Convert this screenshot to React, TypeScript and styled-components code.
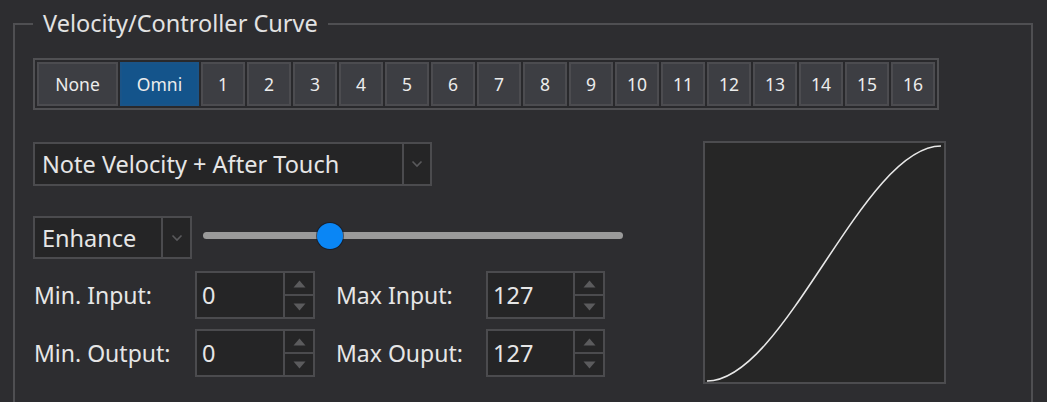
import React from "react";
import styled, { createGlobalStyle } from "styled-components";

const GlobalStyle = createGlobalStyle`
  html, body {
    margin: 0;
    padding: 0;
    background: #2d2d30;
  }
  body {
    font-family: "Noto Sans", "Open Sans", sans-serif;
    color: #e4e4e4;
    overflow: hidden;
  }
`;

const Page = styled.div`
  width: 1047px;
  height: 402px;
  box-sizing: border-box;
  padding: 11px 14px 0 13px;
  background: #2d2d30;
  overflow: hidden;
`;

const Group = styled.fieldset`
  margin: 0;
  height: 391px;
  box-sizing: border-box;
  border: 2px solid #4f4f52;
  border-bottom: none;
  border-radius: 0;
  padding: 21px 18px 0 18px;
  min-width: 0;
`;

const Title = styled.legend`
  padding: 0 10px 2px 10px;
  font-size: 23.5px;
  line-height: 24px;
  color: #e2e2e2;
`;

const ChannelStrip = styled.div`
  display: inline-flex;
  gap: 2px;
  padding: 2px;
  border: 2px solid #505053;
  background: #29292c;
`;

const ChannelButton = styled.button<{ $active?: boolean; $wide?: number }>`
  width: ${(p) => p.$wide ?? 44}px;
  height: 44px;
  box-sizing: border-box;
  margin: 0;
  padding: 0;
  border: 2px solid ${(p) => (p.$active ? "#1a5488" : "#4c4c50")};
  background: ${(p) => (p.$active ? "#14548b" : "#3d3e43")};
  color: #ececec;
  font-family: "Noto Sans", "Open Sans", sans-serif;
  font-size: 17.5px;
  cursor: pointer;
`;

const Body = styled.div`
  display: flex;
  align-items: flex-start;
  gap: 80px;
  margin-top: 32px;
`;

const Controls = styled.div`
  display: flex;
  flex-direction: column;
  width: 590px;
`;

const SelectBox = styled.div<{ $width: number; $height: number }>`
  display: flex;
  width: ${(p) => p.$width}px;
  height: ${(p) => p.$height}px;
  box-sizing: border-box;
  border: 2px solid #4b4b4e;
  background: #252526;
`;

const SelectText = styled.div`
  flex: 1;
  display: flex;
  align-items: center;
  padding-left: 7px;
  font-size: 23.5px;
  color: #e6e6e6;
  white-space: nowrap;
  overflow: hidden;
`;

const SelectArrow = styled.div<{ $width: number }>`
  width: ${(p) => p.$width}px;
  border-left: 2px solid #4b4b4e;
  display: flex;
  align-items: center;
  justify-content: center;
`;

const CurveRow = styled.div`
  display: flex;
  align-items: center;
  gap: 11px;
  margin-top: 30px;
`;

const SliderTrack = styled.div`
  position: relative;
  width: 420px;
  height: 7px;
  border-radius: 4px;
  background: #9a9a9a;
  margin-top: -4px;
`;

const SliderThumb = styled.div`
  position: absolute;
  top: 50%;
  width: 26px;
  height: 26px;
  margin: -13px 0 0 -13px;
  border-radius: 50%;
  background: #0a86f5;
  box-shadow: 0 0 0 1px rgba(10, 20, 40, 0.55);
`;

const RangeGrid = styled.div`
  display: grid;
  grid-template-columns: 162px 120px 171px 119px;
  row-gap: 10px;
  margin-top: 12px;
  align-items: center;
`;

const FieldLabel = styled.div<{ $indent?: boolean }>`
  font-size: 23px;
  color: #e6e6e6;
  padding-left: ${(p) => (p.$indent ? 21 : 1)}px;
  white-space: nowrap;
`;

const SpinBox = styled.div`
  display: flex;
  height: 48px;
  box-sizing: border-box;
  border: 2px solid #4b4b4e;
  background: #252526;
`;

const SpinValue = styled.div`
  flex: 1;
  display: flex;
  align-items: center;
  padding-left: 5px;
  font-size: 23.5px;
  color: #e6e6e6;
`;

const SpinButtons = styled.div`
  width: 28px;
  border-left: 2px solid #4b4b4e;
  display: flex;
  flex-direction: column;
`;

const SpinButton = styled.div<{ $top?: boolean }>`
  flex: 1;
  display: flex;
  align-items: center;
  justify-content: center;
  border-top: ${(p) => (p.$top ? "none" : "2px solid #4b4b4e")};
`;

const Graph = styled.div`
  width: 243px;
  height: 243px;
  box-sizing: border-box;
  border: 2px solid #4c4c4f;
  background: #262626;
  margin-top: -1px;
`;

const Chevron = () => (
  <svg width="12" height="8" viewBox="0 0 12 8">
    <polyline points="1.5,1.5 6,6 10.5,1.5" fill="none" stroke="#5a5a5c" strokeWidth="1.6" />
  </svg>
);

const Arrow = ({ up }: { up?: boolean }) => (
  <svg width="13" height="8" viewBox="0 0 13 8">
    <polygon points={up ? "6.5,0.5 12.5,7.5 0.5,7.5" : "0.5,0.5 12.5,0.5 6.5,7.5"} fill="#5b5b5d" />
  </svg>
);

const Select = ({ label, width, height, arrowWidth }: { label: string; width: number; height: number; arrowWidth: number }) => (
  <SelectBox $width={width} $height={height}>
    <SelectText>{label}</SelectText>
    <SelectArrow $width={arrowWidth}>
      <Chevron />
    </SelectArrow>
  </SelectBox>
);

const Spin = ({ value }: { value: number }) => (
  <SpinBox>
    <SpinValue>{value}</SpinValue>
    <SpinButtons>
      <SpinButton $top>
        <Arrow up />
      </SpinButton>
      <SpinButton>
        <Arrow />
      </SpinButton>
    </SpinButtons>
  </SpinBox>
);

const Slider = ({ value, max }: { value: number; max: number }) => (
  <SliderTrack>
    <SliderThumb style={{ left: `${(value / max) * 100}%` }} />
  </SliderTrack>
);

export default function App() {
  const channels = Array.from({ length: 16 }, (_, i) => String(i + 1));
  return (
    <>
      <GlobalStyle />
      <Page>
        <Group>
          <Title>Velocity/Controller Curve</Title>
          <ChannelStrip>
            <ChannelButton $wide={81}>None</ChannelButton>
            <ChannelButton $wide={79} $active>
              Omni
            </ChannelButton>
            {channels.map((c) => (
              <ChannelButton key={c}>{c}</ChannelButton>
            ))}
          </ChannelStrip>
          <Body>
            <Controls>
              <Select label="Note Velocity + After Touch" width={399} height={44} arrowWidth={26} />
              <CurveRow>
                <Select label="Enhance" width={159} height={43} arrowWidth={27} />
                <Slider value={30.3} max={100} />
              </CurveRow>
              <RangeGrid>
                <FieldLabel>Min. Input:</FieldLabel>
                <Spin value={0} />
                <FieldLabel $indent>Max Input:</FieldLabel>
                <Spin value={127} />
                <FieldLabel>Min. Output:</FieldLabel>
                <Spin value={0} />
                <FieldLabel $indent>Max Ouput:</FieldLabel>
                <Spin value={127} />
              </RangeGrid>
            </Controls>
            <Graph>
              <svg width="239" height="239" viewBox="0 0 239 239">
                <path d="M2 238 C80 238, 158 3, 236 3" fill="none" stroke="#e8e8e8" strokeWidth="1.6" />
              </svg>
            </Graph>
          </Body>
        </Group>
      </Page>
    </>
  );
}
